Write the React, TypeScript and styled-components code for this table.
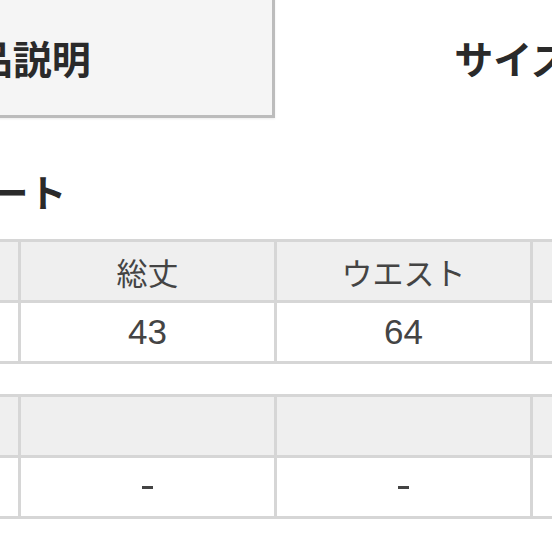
import React from "react";
import styled, { createGlobalStyle } from "styled-components";

const Global = createGlobalStyle`
  html, body {
    margin: 0;
    padding: 0;
    background: #ffffff;
    overflow: hidden;
  }
  body {
    font-family: "Liberation Sans", "Noto Sans CJK JP", sans-serif;
    color: #333;
  }
`;

const Page = styled.div`
  width: 1100px;
  margin-left: -238px;
  margin-top: -20px;
  display: flex;
  flex-direction: column;
`;

const TabBar = styled.div`
  display: flex;
  width: 1027px;
`;

const Tab = styled.div<{ $active?: boolean; $shift?: number }>`
  box-sizing: border-box;
  width: 514px;
  height: 138px;
  padding-top: 16px;
  padding-right: ${(p) => p.$shift ?? 0}px;
  display: flex;
  align-items: center;
  justify-content: center;
  font-family: "Noto Sans CJK JP", sans-serif;
  font-size: 39px;
  font-weight: 700;
  color: #2a2a2a;
  background: ${(p) => (p.$active ? "#f5f5f5" : "transparent")};
  border: ${(p) => (p.$active ? "3px solid #bcbcbc" : "3px solid transparent")};
  box-shadow: ${(p) => (p.$active ? "0 1px 2px rgba(0,0,0,0.08)" : "none")};
`;

const Heading = styled.h2`
  margin: 50px 0 0 40px;
  height: 46px;
  line-height: 46px;
  font-family: "Noto Sans CJK JP", sans-serif;
  font-size: 38px;
  font-weight: 700;
  color: #2a2a2a;
`;

const Table = styled.div<{ $top: number }>`
  margin-top: ${(p) => p.$top}px;
  display: grid;
  grid-template-columns: repeat(4, 253px);
  grid-auto-rows: 58px;
  gap: 3px;
  padding: 3px;
  width: max-content;
  background: #d6d6d6;
`;

const HeadCell = styled.div`
  background: #efefef;
  display: flex;
  align-items: center;
  justify-content: center;
  font-family: "Noto Sans CJK JP", sans-serif;
  font-size: 31px;
  color: #444;
`;

const DataCell = styled.div`
  background: #ffffff;
  display: flex;
  align-items: center;
  justify-content: center;
  font-family: "Liberation Sans", "Noto Sans CJK JP", sans-serif;
  font-size: 35px;
  color: #444;
`;

const Dash = styled.span`
  display: inline-block;
  width: 11px;
  height: 3px;
  background: #444;
`;

export default function App() {
  return (
    <>
      <Global />
      <Page>
        <TabBar>
          <Tab $active $shift={12}>商品説明</Tab>
          <Tab $shift={40}>サイズ</Tab>
        </TabBar>
        <Heading>サイズチャート</Heading>
        <Table $top={25}>
          <HeadCell>サイズ</HeadCell>
          <HeadCell>総丈</HeadCell>
          <HeadCell>ウエスト</HeadCell>
          <HeadCell>ヒップ</HeadCell>
          <DataCell>M</DataCell>
          <DataCell>43</DataCell>
          <DataCell>64</DataCell>
          <DataCell>-</DataCell>
        </Table>
        <Table $top={30}>
          <HeadCell></HeadCell>
          <HeadCell></HeadCell>
          <HeadCell></HeadCell>
          <HeadCell></HeadCell>
          <DataCell></DataCell>
          <DataCell><Dash /></DataCell>
          <DataCell><Dash /></DataCell>
          <DataCell></DataCell>
        </Table>
      </Page>
    </>
  );
}
